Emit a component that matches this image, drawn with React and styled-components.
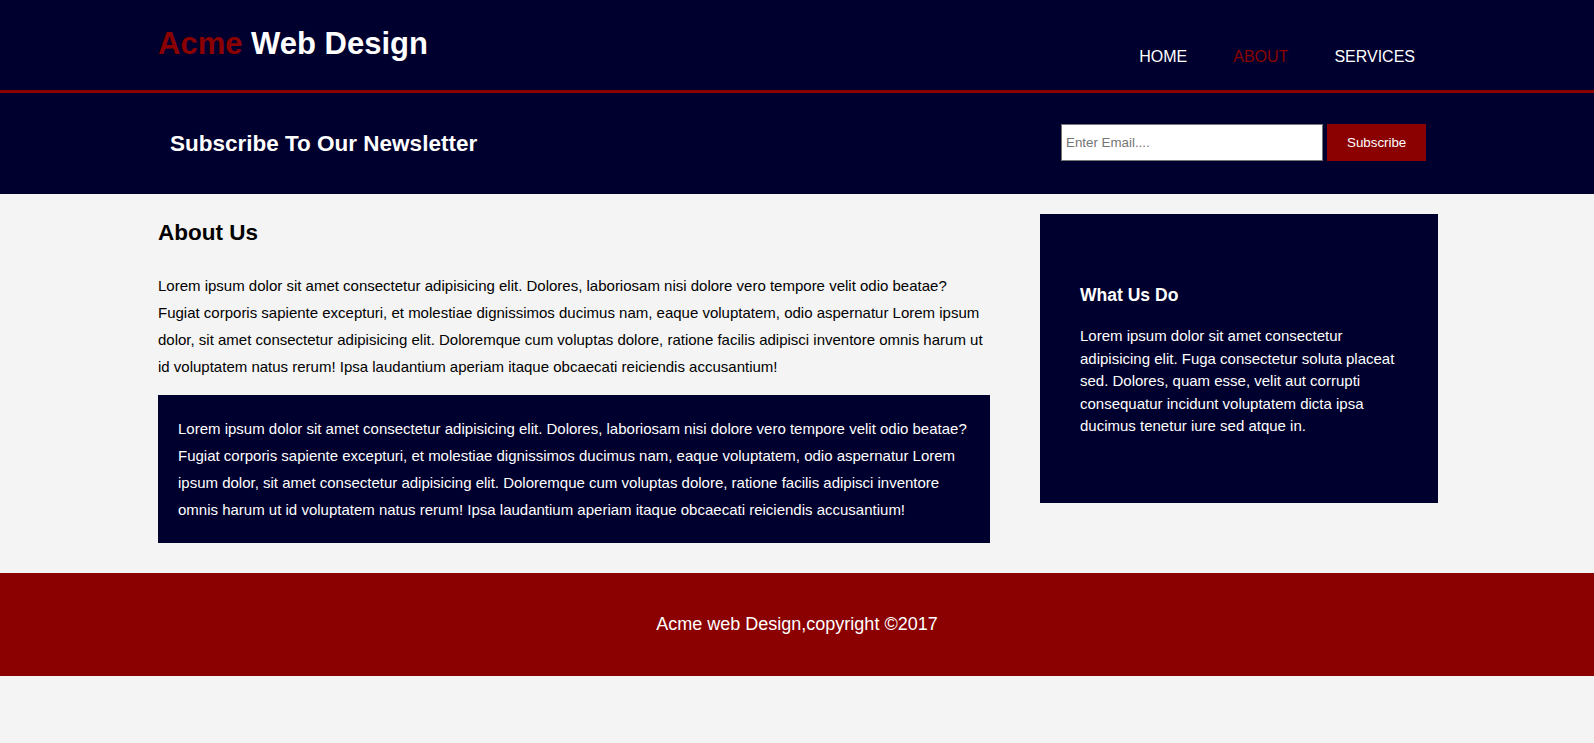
import React from "react";
import styled, { createGlobalStyle } from "styled-components";

const NAVY = "#00002e";
const RED = "#8b0000";

const Global = createGlobalStyle`
  html, body { margin: 0; padding: 0; }
  body {
    background: #f4f4f4;
    font: 15px/1.5 "Liberation Sans", Arial, Helvetica, sans-serif;
    color: #000;
  }
`;

const Container = styled.div`
  box-sizing: border-box;
  width: 1282px;
  padding-left: 2px;
  margin: 0 auto;
`;

const Header = styled.header`
  background: ${NAVY};
  color: #fff;
  height: 90px;
  border-bottom: 3px solid ${RED};
`;

const HeaderRow = styled(Container)`
  display: flex;
  justify-content: space-between;
  align-items: flex-start;
  padding-top: 28px;
`;

const Brand = styled.h1`
  margin: 0;
  font-size: 31px;
  line-height: 31px;
  font-weight: bold;
  color: #fff;
`;

const Highlight = styled.span`
  color: ${RED};
`;

const NavList = styled.ul`
  display: flex;
  list-style: none;
  margin: 17px 0 0;
  padding: 0;
`;

const NavItem = styled.li`
  padding: 0 23px;
  font-size: 16px;
  line-height: 24px;
  text-transform: uppercase;
  color: ${(p) => (p.$current ? RED : "#fff")};
`;

const NavLink = styled.a`
  color: inherit;
  text-decoration: none;
`;

const Newsletter = styled.section`
  background: ${NAVY};
  color: #fff;
  height: 101px;
`;

const NewsletterRow = styled(Container)`
  height: 100%;
  display: flex;
  align-items: center;
  justify-content: space-between;
  padding-left: 14px;
  padding-right: 12px;
`;

const NewsTitle = styled.h1`
  margin: 0;
  font-size: 22.5px;
  line-height: 1.5;
  font-weight: bold;
`;

const Form = styled.form`
  display: flex;
  gap: 4px;
  margin-bottom: 2px;
`;

const EmailInput = styled.input`
  box-sizing: border-box;
  width: 262px;
  height: 37px;
  padding: 4px;
  border: 1px solid #767676;
  font: 13.33px "Liberation Sans", Arial, sans-serif;
  color: #000;
  background: #fff;
  &::placeholder { color: #757575; }
`;

const Button = styled.button`
  height: 37px;
  width: 99px;
  background: ${RED};
  border: 0;
  color: #fff;
  font: 13.33px "Liberation Sans", Arial, sans-serif;
  padding: 0 20px;
`;

const MainGrid = styled(Container)`
  display: grid;
  grid-template-columns: 832px 398px;
  column-gap: 50px;
  align-items: start;
  padding-top: 20px;
  padding-bottom: 30px;
`;

const Article = styled.article``;

const PageTitle = styled.h1`
  margin: 5px 0 26px;
  font-size: 22.5px;
  line-height: 27px;
  font-weight: bold;
`;

const Para = styled.p`
  margin: 0 0 15px;
  line-height: 27px;
`;

const DarkPara = styled(Para)`
  margin: 0;
  background: ${NAVY};
  color: #fff;
  padding: 20px;
`;

const Sidebar = styled.aside`
  background: ${NAVY};
  color: #fff;
  padding: 50px 40px;
`;

const SideTitle = styled.h3`
  margin: 17.55px 0;
  font-size: 17.55px;
  line-height: 1.5;
  font-weight: bold;
`;

const SideText = styled.p`
  margin: 15px 0;
  line-height: 22.5px;
`;

const Footer = styled.footer`
  background: ${RED};
  color: #fff;
  padding: 20px;
  text-align: center;
`;

const FooterText = styled.p`
  margin: 18px 0;
  font-size: 18px;
  line-height: 27px;
`;

const LOREM =
  "Lorem ipsum dolor sit amet consectetur adipisicing elit. Dolores, laboriosam nisi dolore vero tempore velit odio beatae? Fugiat corporis sapiente excepturi, et molestiae dignissimos ducimus nam, eaque voluptatem, odio aspernatur Lorem ipsum dolor, sit amet consectetur adipisicing elit. Doloremque cum voluptas dolore, ratione facilis adipisci inventore omnis harum ut id voluptatem natus rerum! Ipsa laudantium aperiam itaque obcaecati reiciendis accusantium!";

export default function App() {
  const nav = [
    { label: "Home" },
    { label: "About", current: true },
    { label: "Services" },
  ];
  return (
    <>
      <Global />
      <Header>
        <HeaderRow>
          <Brand>
            <Highlight>Acme</Highlight> Web Design
          </Brand>
          <nav>
            <NavList>
              {nav.map((n) => (
                <NavItem key={n.label} $current={n.current}>
                  <NavLink href="#">{n.label}</NavLink>
                </NavItem>
              ))}
            </NavList>
          </nav>
        </HeaderRow>
      </Header>
      <Newsletter>
        <NewsletterRow>
          <NewsTitle>Subscribe To Our Newsletter</NewsTitle>
          <Form onSubmit={(e) => e.preventDefault()}>
            <EmailInput type="email" placeholder="Enter Email...." />
            <Button type="submit">Subscribe</Button>
          </Form>
        </NewsletterRow>
      </Newsletter>
      <MainGrid>
        <Article>
          <PageTitle>About Us</PageTitle>
          <Para>{LOREM}</Para>
          <DarkPara>{LOREM}</DarkPara>
        </Article>
        <Sidebar>
          <SideTitle>What Us Do</SideTitle>
          <SideText>
            Lorem ipsum dolor sit amet consectetur adipisicing elit. Fuga
            consectetur soluta placeat sed. Dolores, quam esse, velit aut
            corrupti consequatur incidunt voluptatem dicta ipsa ducimus tenetur
            iure sed atque in.
          </SideText>
        </Sidebar>
      </MainGrid>
      <Footer>
        <FooterText>Acme web Design,copyright ©2017</FooterText>
      </Footer>
    </>
  );
}
